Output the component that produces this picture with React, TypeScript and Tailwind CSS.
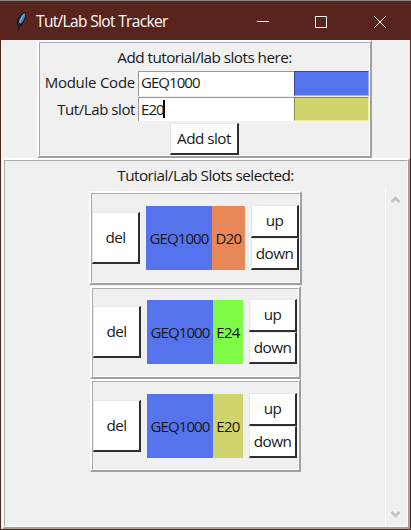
import type { ReactNode } from "react";

function Ridge({ className, children }: { className: string; children: ReactNode }) {
  return (
    <div className={`shrink-0 border-2 border-t-white border-l-white border-r-[#a0a0a0] border-b-[#a0a0a0] ${className}`}>
      <div className="h-full w-full border border-t-[#a8a8a8] border-l-[#a8a8a8] border-r-white border-b-white">
        {children}
      </div>
    </div>
  );
}

function Button({ className, children }: { className: string; children: ReactNode }) {
  return (
    <button
      className={`flex shrink-0 items-center justify-center whitespace-nowrap border-r-2 border-b-2 border-t border-l border-t-[#e8e8e8] border-l-[#e8e8e8] border-r-[#2e2e2e] border-b-[#2e2e2e] bg-white pb-[2px] ${className}`}
    >
      {children}
    </button>
  );
}

type Slot = { code: string; slot: string; color: string; frame: string; left: string; mid: string; chip: string; gap: string };

const slots: Slot[] = [
  { code: "GEQ1000", slot: "D20", color: "bg-[#e88858]", frame: "ml-[84px] w-[213px] h-[94px]", left: "mt-[18px]", mid: "mt-[12px]", chip: "w-[33px]", gap: "ml-[6px] mt-[11px]" },
  { code: "GEQ1000", slot: "E24", color: "bg-[#7ffb47]", frame: "ml-[85px] mt-px w-[211px] h-[93px]", left: "mt-[17px]", mid: "mt-[11px]", chip: "w-[30px]", gap: "ml-[6px] mt-[10px]" },
  { code: "GEQ1000", slot: "E20", color: "bg-[#cfd46d]", frame: "ml-[85px] w-[211px] h-[93px]", left: "mt-[18px]", mid: "mt-[12px]", chip: "w-[30px]", gap: "ml-[6px] mt-[11px]" },
];

function SlotRow({ item }: { item: Slot }) {
  return (
    <Ridge className={item.frame}>
      <div className="flex items-start">
        <Button className={`h-[52px] w-[48px] ${item.left}`}>del</Button>
        <div className={`ml-[6px] flex h-[64px] text-[15px] ${item.mid}`}>
          <div className="flex w-[66px] items-center justify-center bg-[#5573ec] pb-px tracking-[-0.9px]">{item.code}</div>
          <div className={`flex items-center justify-center pb-px tracking-[-0.7px] ${item.chip} ${item.color}`}>{item.slot}</div>
        </div>
        <div className={`flex w-[48px] flex-col ${item.gap}`}>
          <Button className="h-[33px] w-full">up</Button>
          <Button className="h-[32px] w-full">down</Button>
        </div>
      </div>
    </Ridge>
  );
}

function Chevron({ up = false }: { up?: boolean }) {
  return (
    <svg width="11" height="8" viewBox="0 0 11 8" fill="none" stroke="#c1c1c1" strokeWidth="2.6">
      <path d={up ? "M1.5 6 5.5 2 9.5 6" : "M1.5 2 5.5 6 9.5 2"} />
    </svg>
  );
}

export default function App() {
  return (
    <div className="flex h-[530px] w-[411px] flex-col overflow-hidden bg-[#59241d] font-['Open_Sans','Noto_Sans',sans-serif] text-[15.3px] leading-5 tracking-[-0.54px] text-[#191919]">
      <div className="h-px shrink-0 bg-[#8b8583]" />
      <header className="flex h-[39px] shrink-0 items-center text-white">
        <svg className="ml-[14px]" width="14" height="20" viewBox="0 0 14 20">
          <path d="M11.5 1C7 2 2 8 3 14l2 3C9 14 13 7 11.5 1Z" fill="#10171f" />
          <path d="M11 2C7 4 4.5 9 4.5 14 9 12 12 6 11 2Z" fill="#4a80bd" />
          <path d="M10 3C7 7 6 11 4 18" fill="none" stroke="#a9cdeb" strokeWidth="0.8" />
          <path d="M5.5 12 4 19" fill="none" stroke="#111" strokeWidth="1.3" />
        </svg>
        <span className="ml-[8px] w-[200px] whitespace-nowrap text-[15.5px] tracking-[-0.66px]">Tut/Lab Slot Tracker</span>
        <svg className="ml-[21px]" width="130" height="14" viewBox="0 0 130 14" fill="none" stroke="white">
          <path d="M0 7.5h12M58.5 2.5h11v11h-11zM117 2l12 12M129 2l-12 12" />
        </svg>
      </header>
      <main className="mr-px ml-px flex h-[489px] flex-col bg-[#f0f0f0]">
        <Ridge className="ml-[36px] h-[118px] w-[335px]">
          <div className="flex h-[28px] items-center justify-center pb-px">Add tutorial/lab slots here:</div>
          <div className="flex h-[26px]">
            <label className="w-[98px] pt-px pr-[3px] text-right text-[15px] tracking-[-0.25px]">Module Code</label>
            <div className="h-[25px] w-[156px] border-t border-l border-[#999] bg-white pl-[2px] text-[15px] tracking-[-0.95px]">GEQ1000</div>
            <div className="h-[25px] w-[75px] border border-t-[#364a98] border-l-[#364a98] border-r-[#9baafa] border-b-[#9baafa] bg-[#5573ec]" />
          </div>
          <div className="flex h-[26px]">
            <label className="w-[98px] pt-[2px] pr-[3px] text-right text-[15px] tracking-[-0.42px]">Tut/Lab slot</label>
            <div className="flex h-[24px] w-[156px] items-center border-t border-l border-[#999] bg-white pb-px pl-[2px] text-[15px] tracking-[-0.9px]">
              E20<span className="-ml-px h-[18px] w-[2px] bg-black" />
            </div>
            <div className="h-[24px] w-[75px] border border-t-[#888b48] border-l-[#888b48] border-r-[#f3f59e] border-b-[#f3f59e] bg-[#cfd46d]" />
          </div>
          <Button className="ml-[130px] h-[32px] w-[69px]">Add slot</Button>
        </Ridge>
        <Ridge className="ml-px h-[371px] w-[408px]">
          <div className="flex h-[27px] justify-center pt-[4px] pr-px">Tutorial/Lab Slots selected:</div>
          <div className="flex h-[338px]">
            <div className="flex min-w-0 grow flex-col pt-[3px]">
              {slots.map((item) => <SlotRow key={item.slot} item={item} />)}
            </div>
            <div className="flex w-[22px] flex-col items-center justify-between border-l border-white pt-[8px] pr-[3px] pb-[8px]">
              <Chevron up />
              <Chevron />
            </div>
          </div>
        </Ridge>
      </main>
    </div>
  );
}
